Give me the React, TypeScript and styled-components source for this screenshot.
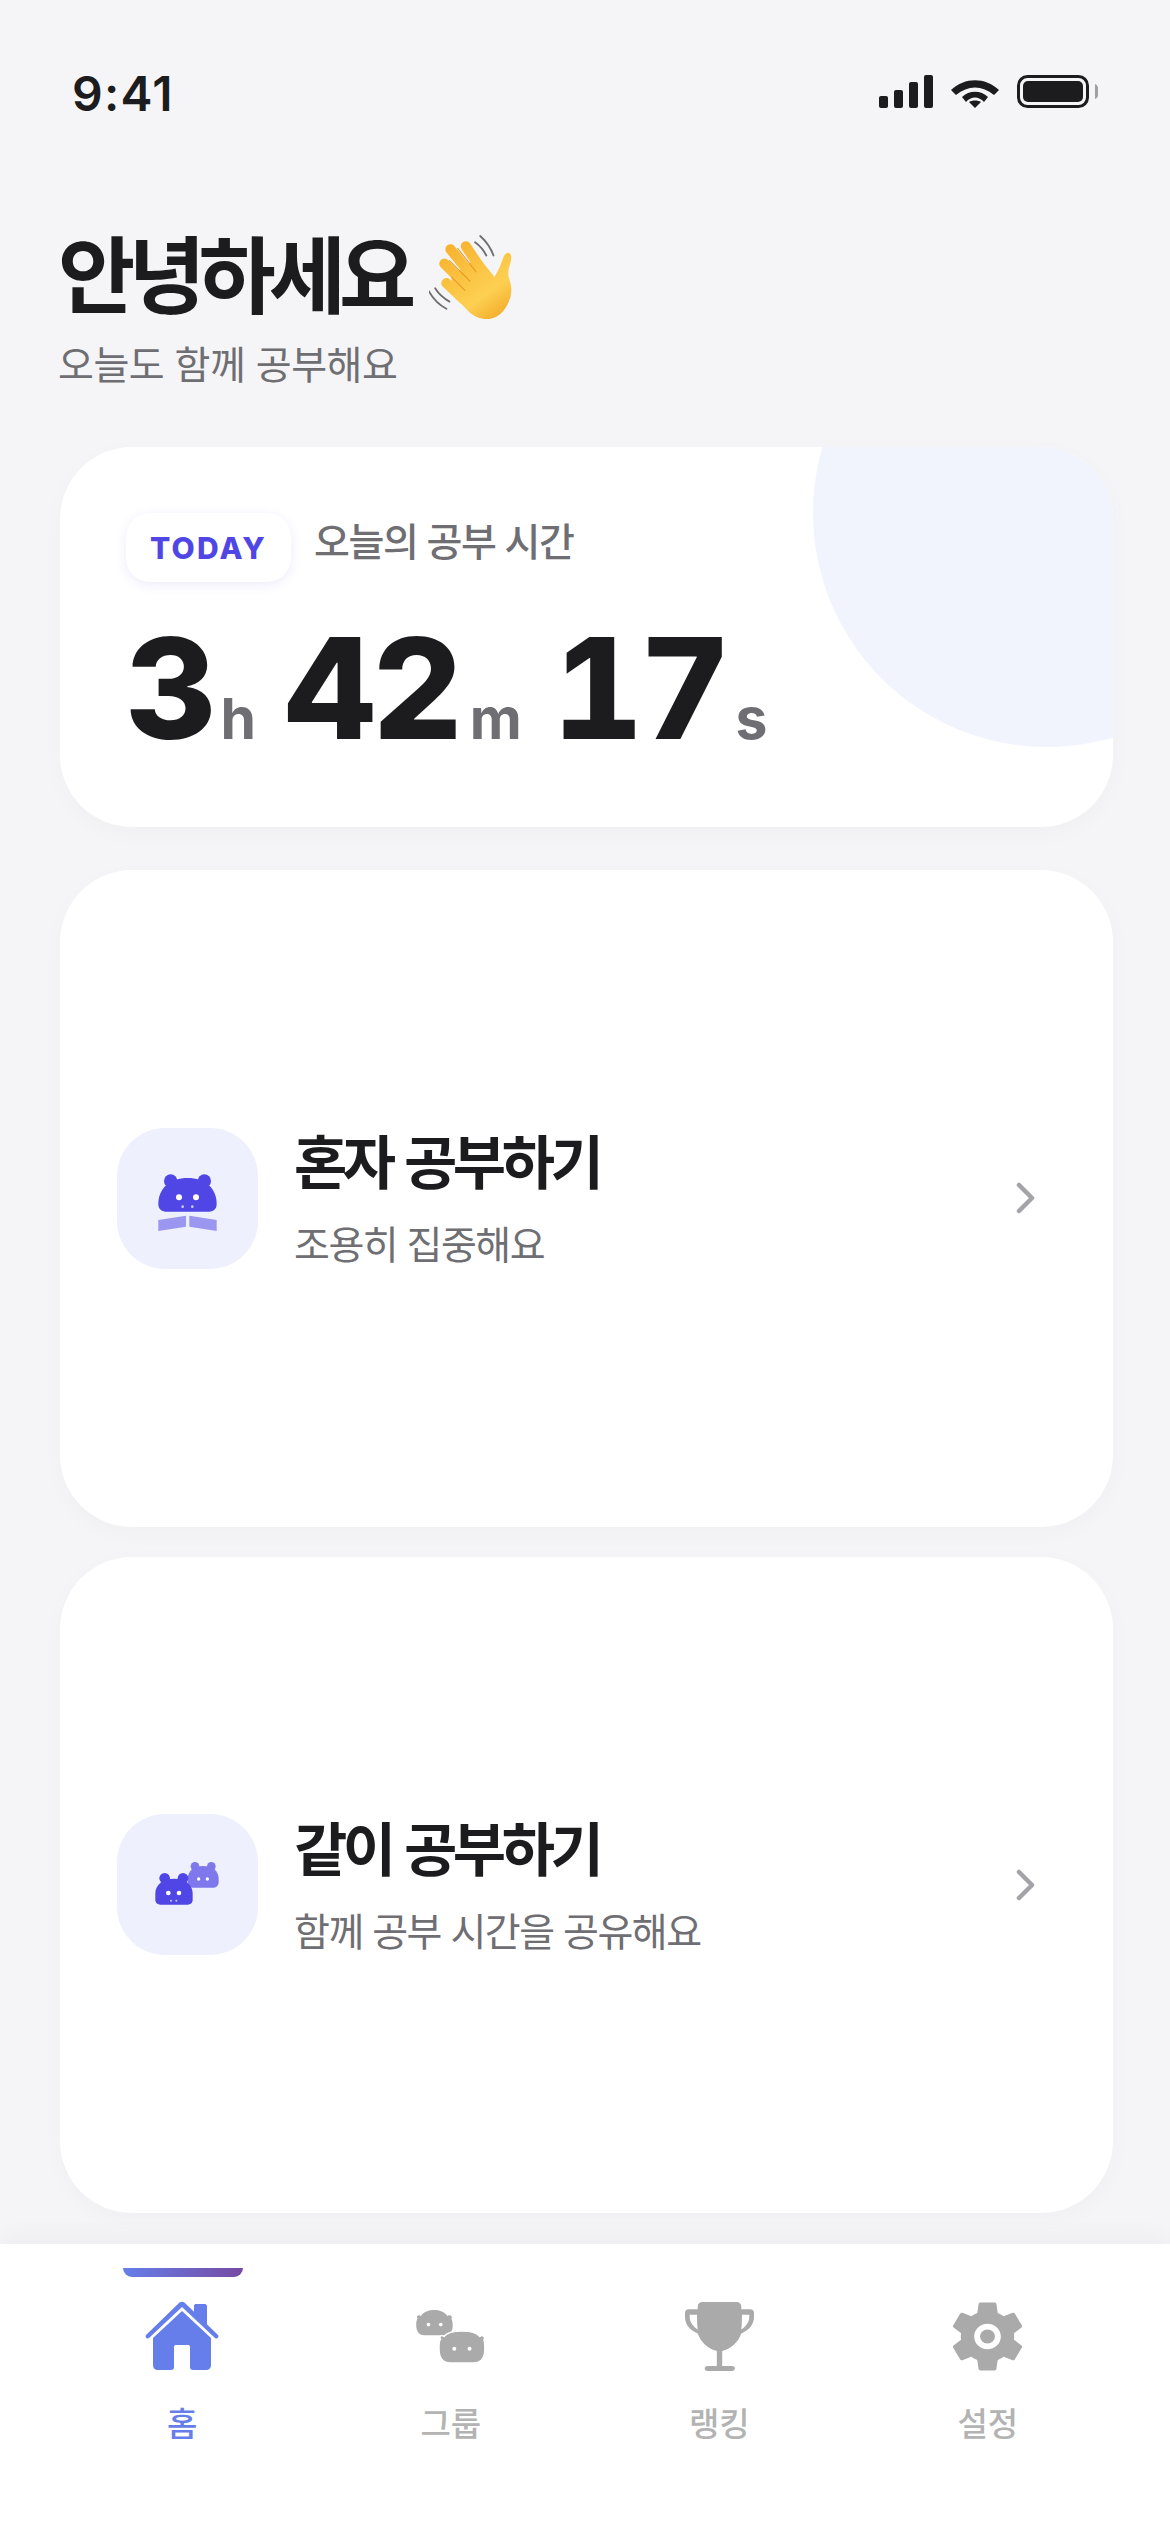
import React from 'react';
import styled, { createGlobalStyle } from 'styled-components';

const GlobalStyle = createGlobalStyle`
  html, body {
    margin: 0;
    padding: 0;
    background: #f5f5f7;
  }
  * {
    box-sizing: border-box;
  }
`;

const FONT = `Inter, "Noto Sans CJK KR", sans-serif`;
const INK = '#1c1c1e';
const MUTED = '#6e6e73';
const INDIGO = '#4f46e5';
const TAB_ACTIVE = '#667eea';
const TAB_IDLE = '#aaaaaa';

const Screen = styled.div`
  width: 1170px;
  height: 2532px;
  display: flex;
  flex-direction: column;
  background: #f5f5f7;
  font-family: ${FONT};
  overflow: hidden;
`;

const StatusBar = styled.div`
  height: 156px;
  flex: none;
  display: flex;
  justify-content: space-between;
  align-items: flex-start;
  padding: 66px 72px 0 72px;
`;

const Clock = styled.div`
  font-size: 48px;
  line-height: 56px;
  font-weight: 600;
  color: ${INK};
  letter-spacing: 1.3px;
`;

const StatusIcons = styled.div`
  display: flex;
  align-items: flex-end;
  gap: 18px;
  padding-top: 9px;
`;

const Header = styled.header`
  flex: none;
  height: 291px;
  padding: 76px 60px 0 58px;
`;

const TitleRow = styled.div`
  display: flex;
  align-items: center;
  gap: 20px;
  height: 90px;
`;

const Title = styled.h1`
  margin: 0;
  font-size: 84px;
  line-height: 90px;
  font-weight: 700;
  color: ${INK};
  letter-spacing: -7px;
`;

const Subtitle = styled.p`
  margin: 16px 0 0;
  font-size: 39px;
  line-height: 54px;
  font-weight: 400;
  color: ${MUTED};
  letter-spacing: -0.5px;
`;

const Content = styled.main`
  flex: 1;
  min-height: 0;
  display: flex;
  flex-direction: column;
  padding: 0 57px 31px 60px;
`;

const StudyCard = styled.section`
  position: relative;
  flex: none;
  height: 380px;
  margin-bottom: 43px;
  padding: 66px 66px 0;
  background: #fff;
  border-radius: 72px;
  box-shadow: 0 6px 24px rgba(0, 0, 0, 0.025);
  overflow: hidden;
`;

const Blob = styled.div`
  position: absolute;
  top: -168px;
  right: -168px;
  width: 468px;
  height: 468px;
  border-radius: 50%;
  background: #f1f4fd;
`;

const StudyHead = styled.div`
  position: relative;
  display: flex;
  align-items: center;
  gap: 23px;
`;

const Pill = styled.div`
  width: 165px;
  height: 69px;
  display: flex;
  align-items: center;
  justify-content: center;
  background: #fff;
  border-radius: 24px;
  font-size: 30px;
  font-weight: 800;
  letter-spacing: 2.2px;
  color: ${INDIGO};
  box-shadow: 0 3px 12px rgba(79, 70, 229, 0.1);
`;

const StudyLabel = styled.div`
  font-size: 39px;
  font-weight: 500;
  color: ${MUTED};
  letter-spacing: -1.4px;
  margin-top: -18px;
`;

const Timer = styled.div`
  position: relative;
  display: flex;
  align-items: baseline;
  margin-top: 36px;
  line-height: 140px;
`;

const Digits = styled.span`
  font-size: 140px;
  font-weight: 800;
  color: ${INK};
  letter-spacing: -3px;
  font-variant-numeric: tabular-nums;
`;

const Unit = styled.span<{ $before: number; $after: number }>`
  font-size: 57px;
  font-weight: 700;
  color: ${MUTED};
  margin-left: ${p => p.$before}px;
  margin-right: ${p => p.$after}px;
`;

const ActionCard = styled.section`
  flex: 1;
  display: flex;
  align-items: center;
  padding: 0 74px 0 57px;
  background: #fff;
  border-radius: 72px;
  box-shadow: 0 6px 24px rgba(0, 0, 0, 0.025);

  & + & {
    margin-top: 30px;
  }
`;

const ActionIcon = styled.div`
  flex: none;
  width: 141px;
  height: 141px;
  border-radius: 48px;
  background: #eef0fd;
  margin-right: 36px;
`;

const ActionText = styled.div`
  flex: 1;
`;

const ActionTitle = styled.div`
  font-size: 58px;
  line-height: 76px;
  font-weight: 700;
  color: ${INK};
  letter-spacing: -4.5px;
  word-spacing: 3px;
`;

const ActionSub = styled.div`
  margin-top: 18px;
  font-size: 39px;
  line-height: 52px;
  color: ${MUTED};
  letter-spacing: -1.5px;
`;

const TabBar = styled.nav`
  flex: none;
  height: 288px;
  display: grid;
  grid-template-columns: repeat(4, 1fr);
  padding: 0 48px;
  background: #fff;
  box-shadow: 0 -6px 24px rgba(0, 0, 0, 0.04);
`;

const Tab = styled.div<{ $active?: boolean }>`
  position: relative;
  display: flex;
  flex-direction: column;
  align-items: center;
  padding-top: 52px;
  color: ${p => (p.$active ? TAB_ACTIVE : '#b3b3b3')};
`;

const TabIndicator = styled.div`
  position: absolute;
  top: 24px;
  left: 75px;
  width: 120px;
  height: 9px;
  border-radius: 0 0 9px 9px;
  background: linear-gradient(90deg, #667eea, #764ba2);
`;

const TabIcon = styled.div`
  width: 80px;
  height: 80px;
  display: flex;
  align-items: center;
  justify-content: center;
`;

const TabLabel = styled.div`
  margin-top: 26px;
  font-size: 33px;
  line-height: 44px;
  font-weight: 500;
`;

const IdleIcon = styled.span`
  display: flex;
  color: ${TAB_IDLE};
`;

const Chevron = () => (
  <svg width="24" height="36" viewBox="0 0 24 36" fill="none">
    <path d="M4 5 L17 18 L4 31" stroke="#a3a3a8" strokeWidth="4.5" strokeLinecap="round" strokeLinejoin="round" />
  </svg>
);

const Signal = () => (
  <svg width="54" height="33" viewBox="0 0 54 33" fill={INK}>
    <rect x="0" y="21" width="9" height="12" rx="2" />
    <rect x="15" y="15" width="9" height="18" rx="2" />
    <rect x="30" y="7" width="9" height="26" rx="2" />
    <rect x="45" y="0" width="9" height="33" rx="2" />
  </svg>
);

const Wifi = () => (
  <svg width="48" height="28" viewBox="0 0 48 28" fill={INK}>
    <path d="M0 10 C14 -3 34 -3 48 10 L43 15 C31 5 17 5 5 15 Z" />
    <path d="M11 19 C18 12 30 12 37 19 L33 24 C28 18 20 18 15 24 Z" transform="translate(0 -2)" />
    <path d="M18 22 C21 20 27 20 30 22 L24 28 Z" />
  </svg>
);

const Battery = () => (
  <svg width="81" height="33" viewBox="0 0 81 33" fill="none">
    <rect x="1.5" y="1.5" width="69" height="30" rx="9" stroke={INK} strokeWidth="3" />
    <rect x="6" y="6" width="60" height="21" rx="5" fill={INK} />
    <path d="M78 9 C80 10 81 11 81 13 V20 C81 22 80 23 78 24 Z" fill="#a0a0a4" />
  </svg>
);

const WaveHand = () => (
  <svg width="86" height="86" viewBox="0 0 84 84" fill="none">
    <defs>
      <linearGradient id="hand" x1="20" y1="10" x2="70" y2="80" gradientUnits="userSpaceOnUse">
        <stop offset="0" stopColor="#f7b22e" />
        <stop offset="0.7" stopColor="#fdd052" />
        <stop offset="1" stopColor="#f4ae2c" />
      </linearGradient>
    </defs>
    <g stroke="#6f6f6f" strokeWidth="1.8" strokeLinecap="round">
      <path d="M0 56 Q6 67 17 73" />
      <path d="M6 53 Q11 61 20 66" />
      <path d="M45 8 Q52 13 56 21" />
      <path d="M50 2 Q59 10 63 21" />
    </g>
    <path
      d="M22 42 L48 22 L64 42 Q70 32 73 22 Q76 16 80 20 Q81 24 79 30 Q76 38 79 46 Q83 58 76 70 Q68 84 54 83 Q44 82 36 73 L22 58 Z"
      fill="url(#hand)"
    />
    <g stroke="url(#hand)" strokeWidth="10" strokeLinecap="round">
      <path d="M36 12 L56 42" />
      <path d="M21 15 L46 46" />
      <path d="M15 29 L38 52" />
      <path d="M17 48 L34 64" />
    </g>
    <g stroke="#e8981f" strokeWidth="1" strokeLinecap="round">
      <path d="M28 14 L46 37" />
      <path d="M20 26 L40 46" />
      <path d="M22 42 L35 55" />
    </g>
  </svg>
);

const SoloBear = () => (
  <svg width="141" height="141" viewBox="0 0 423 423">
    <g fill={INDIGO}>
      <circle cx="161" cy="159" r="20" />
      <circle cx="262" cy="159" r="20" />
      <path d="M124 228 C124 180 160 150 212 150 C264 150 299 180 299 228 C299 242 290 251 276 251 H147 C133 251 124 242 124 228 Z" />
    </g>
    <g fill="#fff">
      <circle cx="186" cy="208" r="9" />
      <circle cx="237" cy="208" r="9" />
      <circle cx="197" cy="236" r="4" opacity="0.7" />
      <circle cx="226" cy="236" r="4" opacity="0.7" />
    </g>
    <g fill="#9b97f0">
      <path d="M124 276 L207 263 V296 L124 309 Z" />
      <path d="M217 263 L299 276 V309 L217 296 Z" />
    </g>
  </svg>
);

const DuoBears = () => (
  <svg width="141" height="141" viewBox="0 0 423 423">
    <g fill={INDIGO} opacity="0.7">
      <circle cx="234" cy="157" r="13" />
      <circle cx="283" cy="157" r="13" />
      <path d="M212 195 C212 170 232 156 258 156 C286 156 305 170 305 195 V205 C305 214 298 221 290 221 H228 C218 221 212 214 212 205 Z" />
    </g>
    <g fill="#fff">
      <circle cx="245" cy="195" r="5" />
      <circle cx="271" cy="195" r="5" />
    </g>
    <g fill={INDIGO}>
      <circle cx="143" cy="193" r="16" />
      <circle cx="198" cy="193" r="16" />
      <path d="M115 238 C115 212 138 194 171 194 C204 194 227 212 227 238 V258 C227 266 220 272 212 272 H130 C122 272 115 266 115 258 Z" />
    </g>
    <g fill="#fff">
      <circle cx="154" cy="237" r="7" />
      <circle cx="186" cy="237" r="7" />
      <circle cx="162" cy="260" r="3" opacity="0.7" />
      <circle cx="178" cy="260" r="3" opacity="0.7" />
    </g>
  </svg>
);

const HomeIcon = () => (
  <svg width="74" height="70" viewBox="0 0 74 70" fill="currentColor">
    <path d="M49 5 C49 3.5 50 3 51 3 H60 C61 3 62 4 62 5 V24 L49 12 Z" />
    <path d="M1 34 L33 3 C35.5 0 38.5 0 41 3 L73 34 C74.5 36 72 38.5 70 37 L37 6 L4 37 C2 38.5 -0.5 36 1 34 Z" />
    <path d="M37 10 L66 37 V64 C66 67 64 69 61 69 H48 C46 69 45 68 45 66 V46 C45 44.5 44 44 43 44 H31 C30 44 29 44.5 29 46 V66 C29 68 28 69 26 69 H13 C10 69 8 67 8 64 V37 Z" />
  </svg>
);

const GroupIcon = () => (
  <svg width="69" height="53" viewBox="0 0 207 160" fill="currentColor">
    <path d="M0 45 C0 35 2 30 4 26 C-2 18 8 12 14 18 C30 -6 78 -6 94 18 C100 12 112 18 106 26 C110 34 110 40 110 48 C110 66 100 76 86 76 H24 C10 76 0 66 0 45 Z" />
    <path
      d="M69 110 C69 96 72 90 74 88 C68 80 76 74 84 80 C100 58 176 58 192 80 C200 74 210 80 204 90 C207 96 207 104 207 118 C207 148 192 160 172 160 H104 C84 160 69 148 69 118 Z"
      stroke="#fff"
      strokeWidth="4"
    />
    <g fill="#fff">
      <circle cx="37" cy="44" r="5.5" />
      <circle cx="74" cy="44" r="5.5" />
      <circle cx="115" cy="117" r="6" />
      <circle cx="161" cy="117" r="6" />
    </g>
  </svg>
);

const TrophyIcon = () => (
  <svg width="69" height="69" viewBox="0 0 206 206" fill="currentColor">
    <path
      d="M38 12 C38 5 44 0 52 0 H154 C162 0 168 5 168 12 V22 H194 C202 22 206 26 206 32 V44 C206 66 192 84 168 94 C158 122 136 140 111 146 V191 H140 C152 191 152 206 140 206 H68 C56 206 56 191 68 191 H95 V146 C70 140 48 122 38 94 C14 84 0 66 0 44 V32 C0 26 4 22 12 22 H38 Z M36 38 H14 V44 C14 58 22 72 38 82 C36 68 36 52 36 38 Z M170 38 C170 52 170 68 168 82 C184 72 192 58 192 44 V38 Z"
      fillRule="evenodd"
    />
  </svg>
);

const GearIcon = () => (
  <svg width="69" height="71" viewBox="2.7 2 18.6 20" preserveAspectRatio="none" fill="currentColor">
    <path d="M19.14 12.94c.04-.3.06-.61.06-.94 0-.32-.02-.64-.07-.94l2.03-1.58c.18-.14.23-.41.12-.61l-1.92-3.32c-.12-.22-.37-.29-.59-.22l-2.39.96c-.5-.38-1.03-.7-1.62-.94l-.36-2.54c-.04-.24-.24-.41-.48-.41h-3.84c-.24 0-.43.17-.47.41l-.36 2.54c-.59.24-1.13.57-1.62.94l-2.39-.96c-.22-.08-.47 0-.59.22L2.74 8.87c-.12.21-.08.47.12.61l2.03 1.58c-.05.3-.09.63-.09.94s.02.64.07.94l-2.03 1.58c-.18.14-.23.41-.12.61l1.92 3.32c.12.22.37.29.59.22l2.39-.96c.5.38 1.03.7 1.62.94l.36 2.54c.05.24.24.41.48.41h3.84c.24 0 .44-.17.47-.41l.36-2.54c.59-.24 1.13-.56 1.62-.94l2.39.96c.22.08.47 0 .59-.22l1.92-3.32c.12-.22.07-.47-.12-.61l-2.01-1.58zM12 15.6c-1.98 0-3.6-1.62-3.6-3.6s1.62-3.6 3.6-3.6 3.6 1.62 3.6 3.6-1.62 3.6-3.6 3.6z" />
    <circle cx="12" cy="12" r="2" />
  </svg>
);

const App: React.FC = () => {
  return (
    <Screen>
      <GlobalStyle />
      <StatusBar>
        <Clock>9:41</Clock>
        <StatusIcons>
          <Signal />
          <Wifi />
          <Battery />
        </StatusIcons>
      </StatusBar>

      <Header>
        <TitleRow>
          <Title>안녕하세요</Title>
          <WaveHand />
        </TitleRow>
        <Subtitle>오늘도 함께 공부해요</Subtitle>
      </Header>

      <Content>
        <StudyCard>
          <Blob />
          <StudyHead>
            <Pill>TODAY</Pill>
            <StudyLabel>오늘의 공부 시간</StudyLabel>
          </StudyHead>
          <Timer>
            <Digits>3</Digits>
            <Unit $before={7} $after={29}>h</Unit>
            <Digits>42</Digits>
            <Unit $before={10} $after={31}>m</Unit>
            <Digits>17</Digits>
            <Unit $before={8} $after={0}>s</Unit>
          </Timer>
        </StudyCard>

        <ActionCard>
          <ActionIcon>
            <SoloBear />
          </ActionIcon>
          <ActionText>
            <ActionTitle>혼자 공부하기</ActionTitle>
            <ActionSub>조용히 집중해요</ActionSub>
          </ActionText>
          <Chevron />
        </ActionCard>

        <ActionCard>
          <ActionIcon>
            <DuoBears />
          </ActionIcon>
          <ActionText>
            <ActionTitle>같이 공부하기</ActionTitle>
            <ActionSub>함께 공부 시간을 공유해요</ActionSub>
          </ActionText>
          <Chevron />
        </ActionCard>
      </Content>

      <TabBar>
        <Tab $active>
          <TabIndicator />
          <TabIcon>
            <HomeIcon />
          </TabIcon>
          <TabLabel>홈</TabLabel>
        </Tab>
        <Tab>
          <TabIcon>
            <IdleIcon>
              <GroupIcon />
            </IdleIcon>
          </TabIcon>
          <TabLabel>그룹</TabLabel>
        </Tab>
        <Tab>
          <TabIcon>
            <IdleIcon>
              <TrophyIcon />
            </IdleIcon>
          </TabIcon>
          <TabLabel>랭킹</TabLabel>
        </Tab>
        <Tab>
          <TabIcon>
            <IdleIcon>
              <GearIcon />
            </IdleIcon>
          </TabIcon>
          <TabLabel>설정</TabLabel>
        </Tab>
      </TabBar>
    </Screen>
  );
};

export default App;
